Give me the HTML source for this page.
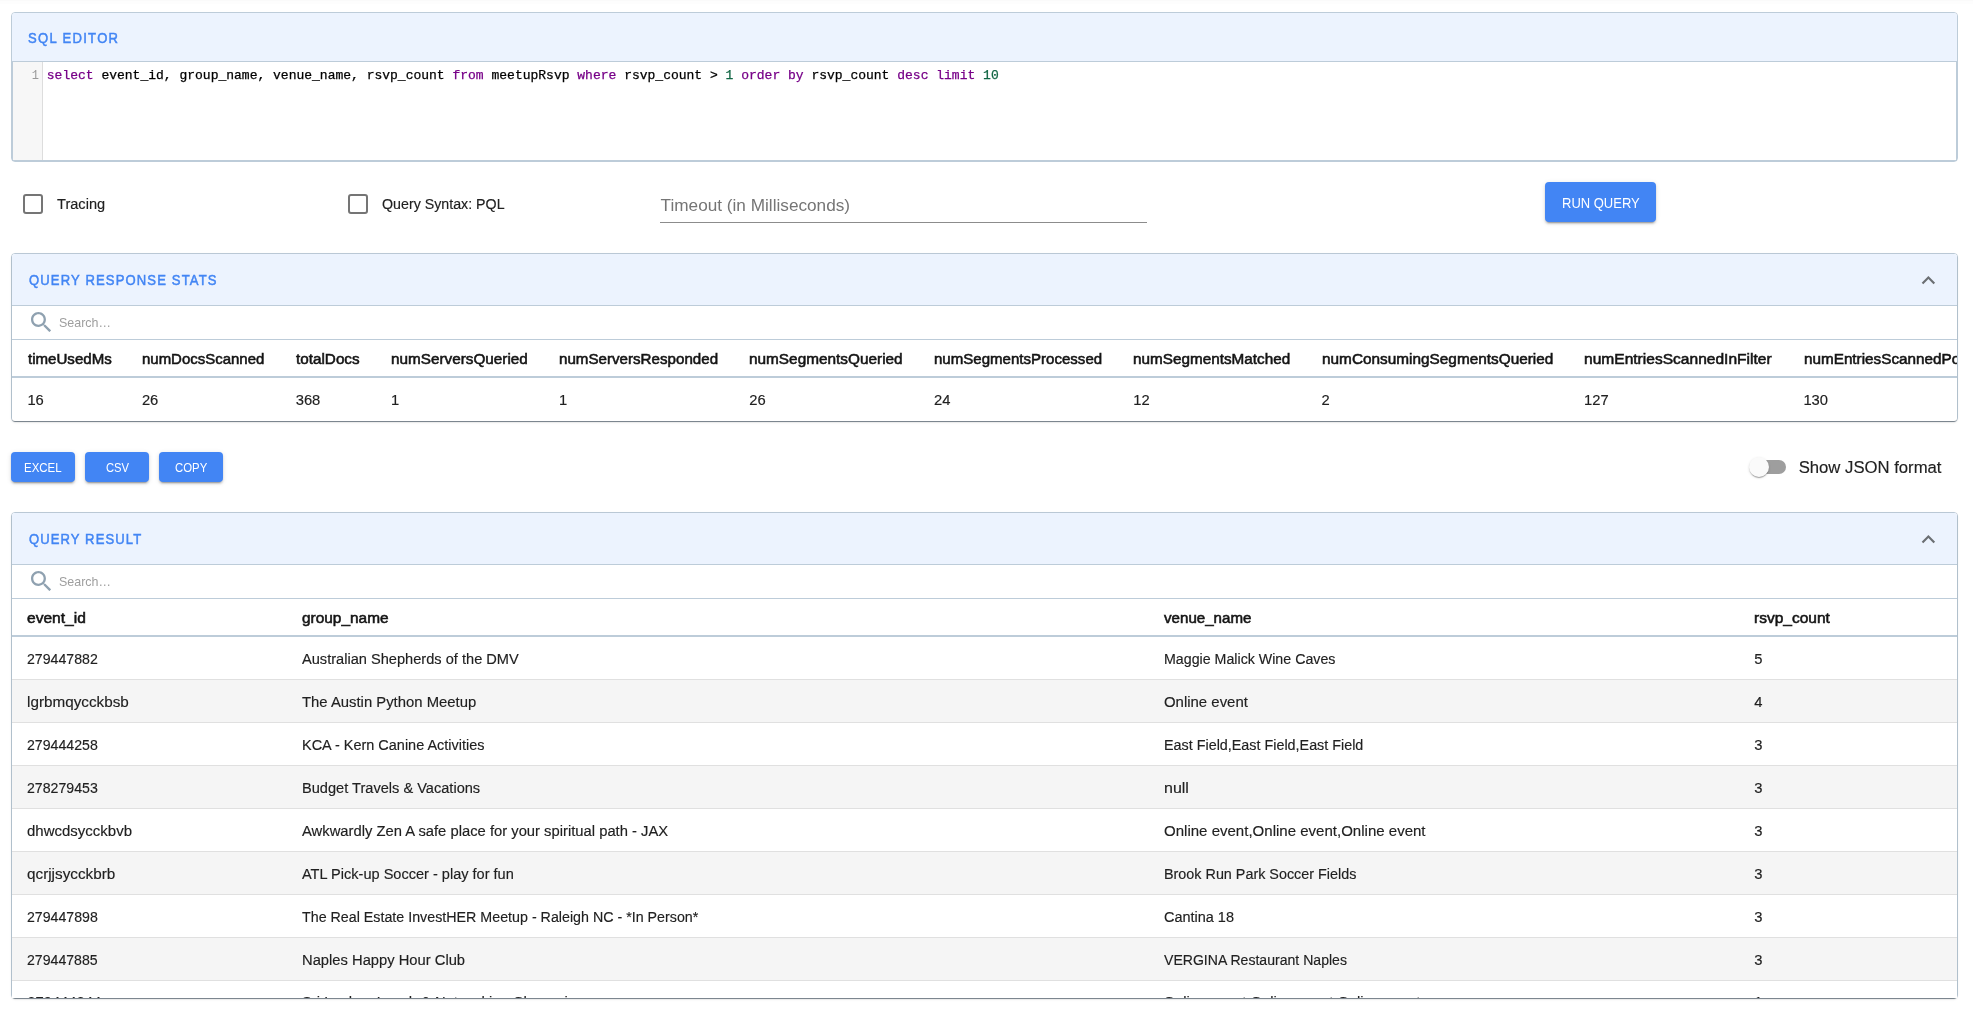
<!DOCTYPE html>
<html><head><meta charset="utf-8"><title>Query Console</title>
<style>
html,body{margin:0;padding:0;background:#fff;}
body{width:1973px;height:1013px;overflow:hidden;position:relative;font-family:"Liberation Sans",sans-serif;}
.t{position:absolute;white-space:nowrap;transform-origin:0 0;}
.mono{position:absolute;white-space:pre;font-family:"Liberation Mono",monospace;font-size:13px;line-height:15px;-webkit-text-stroke:0.25px currentColor;}
.k{color:#770088}
.n{color:#116644}
</style></head><body>
<div id="root" style="position:absolute;left:0;top:0;width:1973px;height:1013px;background:#fff;will-change:transform">
<div style="position:absolute;left:0px;top:0px;width:1973px;height:1px;background:#fafafa"></div>
<div style="position:absolute;left:0px;top:1px;width:1973px;height:3px;background:#fdfdfd"></div>
<div style="position:absolute;left:11px;top:12px;width:1947px;height:150px;box-sizing:border-box;border:1px solid #bdccd9;border-radius:4px;background:#fff"></div>
<div style="position:absolute;left:12px;top:13px;width:1945px;height:48px;background:#ecf3fe;border-radius:3px 3px 0 0"></div>
<div style="position:absolute;left:12px;top:61px;width:1945px;height:1px;background:#bdccd9"></div>
<div style="position:absolute;left:12px;top:62px;width:1px;height:98px;background:#bdccd9"></div>
<div style="position:absolute;left:1956px;top:62px;width:1px;height:98px;background:#bdccd9"></div>
<div style="position:absolute;left:12px;top:160px;width:1945px;height:1px;background:#bdccd9"></div>
<div style="position:absolute;left:13px;top:62px;width:29px;height:98px;background:#f7f7f7"></div>
<div style="position:absolute;left:42px;top:62px;width:1px;height:98px;background:#dddddd"></div>
<div class="t" style="left:27.85px;top:29.87px;font-size:14.50px;line-height:17px;color:#4285f4;letter-spacing:1.444px;-webkit-text-stroke:0.50px #4285f4;transform:scaleX(0.9000)">SQL EDITOR</div>
<div class="mono" style="left:31.80px;top:69.30px;color:#999;-webkit-text-stroke:0;font-size:12px">1</div>
<div class="mono" style="left:46.80px;top:67.60px;color:#000"><span class="k">select</span> event_id, group_name, venue_name, rsvp_count <span class="k">from</span> meetupRsvp <span class="k">where</span> rsvp_count &gt; <span class="n">1</span> <span class="k">order</span> <span class="k">by</span> rsvp_count <span class="k">desc</span> <span class="k">limit</span> <span class="n">10</span></div>
<div style="position:absolute;left:23.4px;top:194.2px;width:20px;height:20px;"><svg width="20" height="20" viewBox="0 0 20 20"><rect x="1" y="1" width="18" height="18" rx="2" ry="2" fill="none" stroke="#757575" stroke-width="2"/></svg></div>
<div class="t" style="left:57.18px;top:194.89px;font-size:14.75px;line-height:18px;color:#212121;-webkit-text-stroke:0.15px #212121;transform:scaleX(0.9897)">Tracing</div>
<div style="position:absolute;left:348.3px;top:194.2px;width:20px;height:20px;"><svg width="20" height="20" viewBox="0 0 20 20"><rect x="1" y="1" width="18" height="18" rx="2" ry="2" fill="none" stroke="#757575" stroke-width="2"/></svg></div>
<div class="t" style="left:381.57px;top:194.79px;font-size:14.75px;line-height:18px;color:#212121;-webkit-text-stroke:0.15px #212121;transform:scaleX(0.9646)">Query Syntax: PQL</div>
<div class="t" style="left:660.60px;top:194.74px;font-size:17.20px;line-height:21px;color:#757575">Timeout (in Milliseconds)</div>
<div style="position:absolute;left:660px;top:222px;width:487px;height:1px;background:#8c8c8c"></div>
<div style="position:absolute;left:1545px;top:182px;width:111px;height:40px;background:#4285f4;border-radius:4px;box-shadow:0 3px 1px -2px rgba(0,0,0,.2),0 2px 2px 0 rgba(0,0,0,.14),0 1px 5px 0 rgba(0,0,0,.12)"></div>
<div class="t" style="left:1562.30px;top:194.09px;font-size:14.75px;line-height:18px;color:#fff;transform:scaleX(0.8805)">RUN QUERY</div>
<div style="position:absolute;left:11px;top:253px;width:1947px;height:169px;box-sizing:border-box;border:1px solid #bdccd9;border-radius:4px;background:#fff"></div>
<div style="position:absolute;left:12px;top:254px;width:1945px;height:167px;border-radius:3px;background:#fff;box-shadow:0 2px 1px -1px rgba(0,0,0,.2),0 1px 1px 0 rgba(0,0,0,.14),0 1px 3px 0 rgba(0,0,0,.12)"></div>
<div style="position:absolute;left:12px;top:254px;width:1945px;height:51px;background:#ecf3fe;border-radius:3px 3px 0 0"></div>
<div style="position:absolute;left:12px;top:305px;width:1945px;height:1px;background:#bdccd9"></div>
<div class="t" style="left:29.05px;top:272.07px;font-size:14.50px;line-height:17px;color:#4285f4;letter-spacing:1.268px;-webkit-text-stroke:0.50px #4285f4;transform:scaleX(0.9000)">QUERY RESPONSE STATS</div>
<div style="position:absolute;left:1914.5px;top:267px;width:26.8px;height:26.8px;"><svg width="26.8" height="26.8" viewBox="0 0 24 24"><path fill="#6b6f73" d="M12 8l-6 6 1.41 1.41L12 10.83l4.59 4.58L18 14z"/></svg></div>
<div style="position:absolute;left:31.4px;top:312.4px;width:20.1px;height:20.1px;"><svg width="20.1" height="20.1" viewBox="3 3 17.5 17.5"><path fill="#8fa1b0" d="M15.5 14h-.79l-.28-.27C15.41 12.59 16 11.11 16 9.5 16 5.91 13.09 3 9.5 3S3 5.91 3 9.5 5.91 16 9.5 16c1.61 0 3.09-.59 4.23-1.57l.27.28v.79l5 4.99L20.49 19l-4.99-5zm-6 0C7.01 14 5 11.99 5 9.5S7.01 5 9.5 5 14 7.01 14 9.5 11.99 14 9.5 14z"/></svg></div>
<div class="t" style="left:58.60px;top:315.29px;font-size:13.00px;line-height:16px;color:#9e9e9e;transform:scaleX(0.9576)">Search…</div>
<div style="position:absolute;left:12px;top:339px;width:1945px;height:1px;background:#bdccd9"></div>
<div style="position:absolute;left:12px;top:340px;width:1945px;height:80px;overflow:hidden">
<div class="t" style="left:15.58px;top:9.69px;font-size:14.75px;line-height:18px;color:#141414;-webkit-text-stroke:0.55px #141414;transform:scaleX(1.0220)">timeUsedMs</div>
<div class="t" style="left:15.38px;top:50.89px;font-size:14.75px;line-height:18px;color:#212121;-webkit-text-stroke:0.15px #212121">16</div>
<div class="t" style="left:130.08px;top:9.69px;font-size:14.75px;line-height:18px;color:#141414;-webkit-text-stroke:0.55px #141414;transform:scaleX(1.0149)">numDocsScanned</div>
<div class="t" style="left:129.88px;top:50.89px;font-size:14.75px;line-height:18px;color:#212121;-webkit-text-stroke:0.15px #212121">26</div>
<div class="t" style="left:283.88px;top:9.69px;font-size:14.75px;line-height:18px;color:#141414;-webkit-text-stroke:0.55px #141414;transform:scaleX(1.0350)">totalDocs</div>
<div class="t" style="left:283.68px;top:50.89px;font-size:14.75px;line-height:18px;color:#212121;-webkit-text-stroke:0.15px #212121">368</div>
<div class="t" style="left:379.17px;top:9.69px;font-size:14.75px;line-height:18px;color:#141414;-webkit-text-stroke:0.55px #141414;transform:scaleX(1.0367)">numServersQueried</div>
<div class="t" style="left:378.97px;top:50.89px;font-size:14.75px;line-height:18px;color:#212121;-webkit-text-stroke:0.15px #212121">1</div>
<div class="t" style="left:547.17px;top:9.69px;font-size:14.75px;line-height:18px;color:#141414;-webkit-text-stroke:0.55px #141414;transform:scaleX(1.0265)">numServersResponded</div>
<div class="t" style="left:546.98px;top:50.89px;font-size:14.75px;line-height:18px;color:#212121;-webkit-text-stroke:0.15px #212121">1</div>
<div class="t" style="left:737.48px;top:9.69px;font-size:14.75px;line-height:18px;color:#141414;-webkit-text-stroke:0.55px #141414;transform:scaleX(1.0410)">numSegmentsQueried</div>
<div class="t" style="left:737.28px;top:50.89px;font-size:14.75px;line-height:18px;color:#212121;-webkit-text-stroke:0.15px #212121">26</div>
<div class="t" style="left:922.17px;top:9.69px;font-size:14.75px;line-height:18px;color:#141414;-webkit-text-stroke:0.55px #141414;transform:scaleX(1.0203)">numSegmentsProcessed</div>
<div class="t" style="left:921.98px;top:50.89px;font-size:14.75px;line-height:18px;color:#212121;-webkit-text-stroke:0.15px #212121">24</div>
<div class="t" style="left:1121.48px;top:9.69px;font-size:14.75px;line-height:18px;color:#141414;-webkit-text-stroke:0.55px #141414;transform:scaleX(1.0366)">numSegmentsMatched</div>
<div class="t" style="left:1121.28px;top:50.89px;font-size:14.75px;line-height:18px;color:#212121;-webkit-text-stroke:0.15px #212121">12</div>
<div class="t" style="left:1309.78px;top:9.69px;font-size:14.75px;line-height:18px;color:#141414;-webkit-text-stroke:0.55px #141414;transform:scaleX(1.0412)">numConsumingSegmentsQueried</div>
<div class="t" style="left:1309.58px;top:50.89px;font-size:14.75px;line-height:18px;color:#212121;-webkit-text-stroke:0.15px #212121">2</div>
<div class="t" style="left:1572.18px;top:9.69px;font-size:14.75px;line-height:18px;color:#141414;-webkit-text-stroke:0.55px #141414;transform:scaleX(1.0548)">numEntriesScannedInFilter</div>
<div class="t" style="left:1571.98px;top:50.89px;font-size:14.75px;line-height:18px;color:#212121;-webkit-text-stroke:0.15px #212121">127</div>
<div class="t" style="left:1791.58px;top:9.69px;font-size:14.75px;line-height:18px;color:#141414;-webkit-text-stroke:0.55px #141414;transform:scaleX(1.0350)">numEntriesScannedPostFilter</div>
<div class="t" style="left:1791.38px;top:50.89px;font-size:14.75px;line-height:18px;color:#212121;-webkit-text-stroke:0.15px #212121">130</div>
</div>
<div style="position:absolute;left:12px;top:376px;width:1945px;height:2px;background:#bdccd9"></div>
<div style="position:absolute;left:11px;top:452px;width:64px;height:30px;background:#4285f4;border-radius:4px;box-shadow:0 3px 1px -2px rgba(0,0,0,.2),0 2px 2px 0 rgba(0,0,0,.14),0 1px 5px 0 rgba(0,0,0,.12)"></div>
<div style="position:absolute;left:85px;top:452px;width:64px;height:30px;background:#4285f4;border-radius:4px;box-shadow:0 3px 1px -2px rgba(0,0,0,.2),0 2px 2px 0 rgba(0,0,0,.14),0 1px 5px 0 rgba(0,0,0,.12)"></div>
<div style="position:absolute;left:159px;top:452px;width:64px;height:30px;background:#4285f4;border-radius:4px;box-shadow:0 3px 1px -2px rgba(0,0,0,.2),0 2px 2px 0 rgba(0,0,0,.14),0 1px 5px 0 rgba(0,0,0,.12)"></div>
<div class="t" style="left:24.30px;top:459.55px;font-size:13.40px;line-height:16px;color:#fff;transform:scaleX(0.8578)">EXCEL</div>
<div class="t" style="left:105.80px;top:459.55px;font-size:13.40px;line-height:16px;color:#fff;transform:scaleX(0.8385)">CSV</div>
<div class="t" style="left:175.00px;top:459.55px;font-size:13.40px;line-height:16px;color:#fff;transform:scaleX(0.8500)">COPY</div>
<div style="position:absolute;left:1751.8px;top:460px;width:34px;height:14px;background:#9e9e9e;border-radius:7px"></div>
<div style="position:absolute;left:1748.6px;top:457.3px;width:20px;height:20px;background:#fafafa;border-radius:50%;box-shadow:0 2px 1px -1px rgba(0,0,0,.2),0 1px 1px 0 rgba(0,0,0,.14),0 1px 3px 0 rgba(0,0,0,.12)"></div>
<div class="t" style="left:1798.67px;top:457.71px;font-size:16.70px;line-height:20px;color:#212121;-webkit-text-stroke:0.15px #212121">Show JSON format</div>
<div style="position:absolute;left:11px;top:512px;width:1947px;height:487px;box-sizing:border-box;border:1px solid #bdccd9;border-radius:4px;background:#fff"></div>
<div style="position:absolute;left:12px;top:513px;width:1945px;height:485px;border-radius:3px;background:#fff;box-shadow:0 2px 1px -1px rgba(0,0,0,.2),0 1px 1px 0 rgba(0,0,0,.14),0 1px 3px 0 rgba(0,0,0,.12)"></div>
<div style="position:absolute;left:12px;top:513px;width:1945px;height:51px;background:#ecf3fe;border-radius:3px 3px 0 0"></div>
<div style="position:absolute;left:12px;top:564px;width:1945px;height:1px;background:#bdccd9"></div>
<div class="t" style="left:29.05px;top:531.07px;font-size:14.50px;line-height:17px;color:#4285f4;letter-spacing:1.214px;-webkit-text-stroke:0.50px #4285f4;transform:scaleX(0.9000)">QUERY RESULT</div>
<div style="position:absolute;left:1914.5px;top:526px;width:26.8px;height:26.8px;"><svg width="26.8" height="26.8" viewBox="0 0 24 24"><path fill="#6b6f73" d="M12 8l-6 6 1.41 1.41L12 10.83l4.59 4.58L18 14z"/></svg></div>
<div style="position:absolute;left:31.4px;top:571.4px;width:20.1px;height:20.1px;"><svg width="20.1" height="20.1" viewBox="3 3 17.5 17.5"><path fill="#8fa1b0" d="M15.5 14h-.79l-.28-.27C15.41 12.59 16 11.11 16 9.5 16 5.91 13.09 3 9.5 3S3 5.91 3 9.5 5.91 16 9.5 16c1.61 0 3.09-.59 4.23-1.57l.27.28v.79l5 4.99L20.49 19l-4.99-5zm-6 0C7.01 14 5 11.99 5 9.5S7.01 5 9.5 5 14 7.01 14 9.5 11.99 14 9.5 14z"/></svg></div>
<div class="t" style="left:58.60px;top:574.29px;font-size:13.00px;line-height:16px;color:#9e9e9e;transform:scaleX(0.9576)">Search…</div>
<div style="position:absolute;left:12px;top:598px;width:1945px;height:1px;background:#bdccd9"></div>
<div class="t" style="left:27.47px;top:609.19px;font-size:14.75px;line-height:18px;color:#141414;-webkit-text-stroke:0.55px #141414;transform:scaleX(1.0556)">event_id</div>
<div class="t" style="left:302.27px;top:609.19px;font-size:14.75px;line-height:18px;color:#141414;-webkit-text-stroke:0.55px #141414;transform:scaleX(1.0453)">group_name</div>
<div class="t" style="left:1163.78px;top:609.19px;font-size:14.75px;line-height:18px;color:#141414;-webkit-text-stroke:0.55px #141414;transform:scaleX(1.0252)">venue_name</div>
<div class="t" style="left:1754.48px;top:609.19px;font-size:14.75px;line-height:18px;color:#141414;-webkit-text-stroke:0.55px #141414;transform:scaleX(1.0513)">rsvp_count</div>
<div style="position:absolute;left:12px;top:635px;width:1945px;height:2px;background:#bdccd9"></div>
<div style="position:absolute;left:12px;top:637px;width:1945px;height:361px;overflow:hidden">
<div style="position:absolute;left:0px;top:0px;width:1945px;height:42px;background:#fff"></div>
<div style="position:absolute;left:0px;top:42px;width:1945px;height:1px;background:#e0e0e0"></div>
<div class="t" style="left:15.27px;top:12.69px;font-size:14.75px;line-height:18px;color:#212121;-webkit-text-stroke:0.15px #212121;transform:scaleX(0.9594)">279447882</div>
<div class="t" style="left:290.07px;top:12.69px;font-size:14.75px;line-height:18px;color:#212121;-webkit-text-stroke:0.15px #212121;transform:scaleX(0.9902)">Australian Shepherds of the DMV</div>
<div class="t" style="left:1151.58px;top:12.69px;font-size:14.75px;line-height:18px;color:#212121;-webkit-text-stroke:0.15px #212121;transform:scaleX(0.9637)">Maggie Malick Wine Caves</div>
<div class="t" style="left:1742.28px;top:12.69px;font-size:14.75px;line-height:18px;color:#212121;-webkit-text-stroke:0.15px #212121">5</div>
<div style="position:absolute;left:0px;top:43px;width:1945px;height:42px;background:#f5f5f5"></div>
<div style="position:absolute;left:0px;top:85px;width:1945px;height:1px;background:#e0e0e0"></div>
<div class="t" style="left:15.27px;top:55.69px;font-size:14.75px;line-height:18px;color:#212121;-webkit-text-stroke:0.15px #212121;transform:scaleX(1.0346)">lgrbmqycckbsb</div>
<div class="t" style="left:290.07px;top:55.69px;font-size:14.75px;line-height:18px;color:#212121;-webkit-text-stroke:0.15px #212121;transform:scaleX(1.0066)">The Austin Python Meetup</div>
<div class="t" style="left:1151.58px;top:55.69px;font-size:14.75px;line-height:18px;color:#212121;-webkit-text-stroke:0.15px #212121;transform:scaleX(1.0127)">Online event</div>
<div class="t" style="left:1742.28px;top:55.69px;font-size:14.75px;line-height:18px;color:#212121;-webkit-text-stroke:0.15px #212121">4</div>
<div style="position:absolute;left:0px;top:86px;width:1945px;height:42px;background:#fff"></div>
<div style="position:absolute;left:0px;top:128px;width:1945px;height:1px;background:#e0e0e0"></div>
<div class="t" style="left:15.27px;top:98.69px;font-size:14.75px;line-height:18px;color:#212121;-webkit-text-stroke:0.15px #212121;transform:scaleX(0.9594)">279444258</div>
<div class="t" style="left:290.07px;top:98.69px;font-size:14.75px;line-height:18px;color:#212121;-webkit-text-stroke:0.15px #212121;transform:scaleX(0.9804)">KCA - Kern Canine Activities</div>
<div class="t" style="left:1151.58px;top:98.69px;font-size:14.75px;line-height:18px;color:#212121;-webkit-text-stroke:0.15px #212121;transform:scaleX(0.9727)">East Field,East Field,East Field</div>
<div class="t" style="left:1742.28px;top:98.69px;font-size:14.75px;line-height:18px;color:#212121;-webkit-text-stroke:0.15px #212121">3</div>
<div style="position:absolute;left:0px;top:129px;width:1945px;height:42px;background:#f5f5f5"></div>
<div style="position:absolute;left:0px;top:171px;width:1945px;height:1px;background:#e0e0e0"></div>
<div class="t" style="left:15.27px;top:141.69px;font-size:14.75px;line-height:18px;color:#212121;-webkit-text-stroke:0.15px #212121;transform:scaleX(0.9594)">278279453</div>
<div class="t" style="left:290.07px;top:141.69px;font-size:14.75px;line-height:18px;color:#212121;-webkit-text-stroke:0.15px #212121;transform:scaleX(0.9892)">Budget Travels &amp; Vacations</div>
<div class="t" style="left:1151.58px;top:141.69px;font-size:14.75px;line-height:18px;color:#212121;-webkit-text-stroke:0.15px #212121;transform:scaleX(1.0828)">null</div>
<div class="t" style="left:1742.28px;top:141.69px;font-size:14.75px;line-height:18px;color:#212121;-webkit-text-stroke:0.15px #212121">3</div>
<div style="position:absolute;left:0px;top:172px;width:1945px;height:42px;background:#fff"></div>
<div style="position:absolute;left:0px;top:214px;width:1945px;height:1px;background:#e0e0e0"></div>
<div class="t" style="left:15.27px;top:184.69px;font-size:14.75px;line-height:18px;color:#212121;-webkit-text-stroke:0.15px #212121;transform:scaleX(1.0169)">dhwcdsycckbvb</div>
<div class="t" style="left:290.07px;top:184.69px;font-size:14.75px;line-height:18px;color:#212121;-webkit-text-stroke:0.15px #212121;transform:scaleX(1.0022)">Awkwardly Zen A safe place for your spiritual path - JAX</div>
<div class="t" style="left:1151.58px;top:184.69px;font-size:14.75px;line-height:18px;color:#212121;-webkit-text-stroke:0.15px #212121;transform:scaleX(1.0191)">Online event,Online event,Online event</div>
<div class="t" style="left:1742.28px;top:184.69px;font-size:14.75px;line-height:18px;color:#212121;-webkit-text-stroke:0.15px #212121">3</div>
<div style="position:absolute;left:0px;top:215px;width:1945px;height:42px;background:#f5f5f5"></div>
<div style="position:absolute;left:0px;top:257px;width:1945px;height:1px;background:#e0e0e0"></div>
<div class="t" style="left:15.27px;top:227.69px;font-size:14.75px;line-height:18px;color:#212121;-webkit-text-stroke:0.15px #212121;transform:scaleX(1.0352)">qcrjjsycckbrb</div>
<div class="t" style="left:290.07px;top:227.69px;font-size:14.75px;line-height:18px;color:#212121;-webkit-text-stroke:0.15px #212121;transform:scaleX(0.9860)">ATL Pick-up Soccer - play for fun</div>
<div class="t" style="left:1151.58px;top:227.69px;font-size:14.75px;line-height:18px;color:#212121;-webkit-text-stroke:0.15px #212121;transform:scaleX(0.9737)">Brook Run Park Soccer Fields</div>
<div class="t" style="left:1742.28px;top:227.69px;font-size:14.75px;line-height:18px;color:#212121;-webkit-text-stroke:0.15px #212121">3</div>
<div style="position:absolute;left:0px;top:258px;width:1945px;height:42px;background:#fff"></div>
<div style="position:absolute;left:0px;top:300px;width:1945px;height:1px;background:#e0e0e0"></div>
<div class="t" style="left:15.27px;top:270.69px;font-size:14.75px;line-height:18px;color:#212121;-webkit-text-stroke:0.15px #212121;transform:scaleX(0.9594)">279447898</div>
<div class="t" style="left:290.07px;top:270.69px;font-size:14.75px;line-height:18px;color:#212121;-webkit-text-stroke:0.15px #212121;transform:scaleX(0.9669)">The Real Estate InvestHER Meetup - Raleigh NC - *In Person*</div>
<div class="t" style="left:1151.58px;top:270.69px;font-size:14.75px;line-height:18px;color:#212121;-webkit-text-stroke:0.15px #212121;transform:scaleX(0.9804)">Cantina 18</div>
<div class="t" style="left:1742.28px;top:270.69px;font-size:14.75px;line-height:18px;color:#212121;-webkit-text-stroke:0.15px #212121">3</div>
<div style="position:absolute;left:0px;top:301px;width:1945px;height:42px;background:#f5f5f5"></div>
<div style="position:absolute;left:0px;top:343px;width:1945px;height:1px;background:#e0e0e0"></div>
<div class="t" style="left:15.27px;top:313.69px;font-size:14.75px;line-height:18px;color:#212121;-webkit-text-stroke:0.15px #212121;transform:scaleX(0.9567)">279447885</div>
<div class="t" style="left:290.07px;top:313.69px;font-size:14.75px;line-height:18px;color:#212121;-webkit-text-stroke:0.15px #212121;transform:scaleX(0.9994)">Naples Happy Hour Club</div>
<div class="t" style="left:1151.58px;top:313.69px;font-size:14.75px;line-height:18px;color:#212121;-webkit-text-stroke:0.15px #212121;transform:scaleX(0.9536)">VERGINA Restaurant Naples</div>
<div class="t" style="left:1742.28px;top:313.69px;font-size:14.75px;line-height:18px;color:#212121;-webkit-text-stroke:0.15px #212121">3</div>
<div style="position:absolute;left:0px;top:344px;width:1945px;height:42px;background:#fff"></div>
<div style="position:absolute;left:0px;top:386px;width:1945px;height:1px;background:#e0e0e0"></div>
<div class="t" style="left:15.27px;top:356.39px;font-size:14.75px;line-height:18px;color:#212121;-webkit-text-stroke:0.15px #212121">279444244</div>
<div class="t" style="left:290.07px;top:356.39px;font-size:14.75px;line-height:18px;color:#212121;-webkit-text-stroke:0.15px #212121">Sri Lankan Lunch &amp; Networking Chennai</div>
<div class="t" style="left:1151.58px;top:356.39px;font-size:14.75px;line-height:18px;color:#212121;-webkit-text-stroke:0.15px #212121">Online event,Online event,Online event</div>
<div class="t" style="left:1742.28px;top:356.39px;font-size:14.75px;line-height:18px;color:#212121;-webkit-text-stroke:0.15px #212121">1</div>
</div>
</div>
</body></html>
